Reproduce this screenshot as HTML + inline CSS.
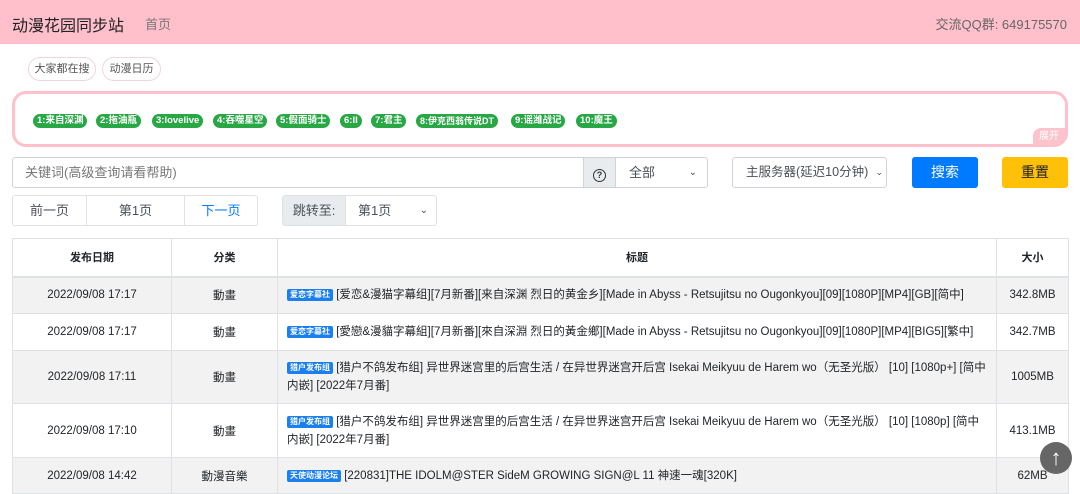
<!DOCTYPE html>
<html><head><meta charset="utf-8"><style>
*{box-sizing:border-box;margin:0;padding:0}
body{width:1080px;height:492px;overflow:hidden;background:#fff;font-family:"Liberation Sans","Noto Sans CJK SC",sans-serif;color:#212529;position:relative}
.a{position:absolute}
.hdr{left:0;top:0;width:1080px;height:44px;background:#ffc0cb}
.pill{top:57px;height:24px;border:1px solid #f0d6da;border-radius:12px;font-size:11px;color:#555;line-height:22px;text-align:center}
.box{left:12px;top:91px;width:1056px;height:56px;border:3px solid #ffc0cb;border-radius:14px}
.g{top:114px;height:14px;background:#28a745;color:#fff;font-size:9.5px;font-weight:bold;border-radius:7px;line-height:14px;padding:0 4px;white-space:nowrap}
.fc{border:1px solid #ced4da;height:31px;top:157px;font-size:13px;line-height:29px;color:#495057;white-space:nowrap;overflow:hidden}
.btn{top:157px;height:31px;border-radius:3px;font-size:14px;line-height:31px;text-align:center}
.pg{top:195px;height:31px;border:1px solid #dee2e6;font-size:13px;line-height:29px;text-align:center;color:#495057}
table{position:absolute;left:12px;top:238px;width:1057px;border-collapse:collapse;font-size:11.5px}
td,th{border:1px solid #dee2e6;padding:0 8px;text-align:center}
th{height:38px;font-weight:bold;font-size:11px;border-bottom:2px solid #dee2e6}
td.t{text-align:left;line-height:18px;padding:0 8px 0 9px}
tr.s td{background:#f2f2f2}
.b{display:inline-block;background:#1b7ff0;color:#fff;font-size:8px;padding:0 3px;border-radius:2px;line-height:12px;vertical-align:1px;font-weight:bold}
</style></head><body>
<div class="a hdr"></div>
<div class="a" style="left:12px;top:12px;font-size:16px;color:#222">动漫花园同步站</div>
<div class="a" style="left:145px;top:14px;font-size:13px;color:#777">首页</div>
<div class="a" style="right:13px;top:14px;font-size:13px;color:#666">交流QQ群: 649175570</div>
<div class="a pill" style="left:28px;width:68px">大家都在搜</div>
<div class="a pill" style="left:102px;width:59px">动漫日历</div>
<div class="a box"></div>
<div class="a g" style="left:33px">1:来自深渊</div>
<div class="a g" style="left:96px">2:拖油瓶</div>
<div class="a g" style="left:152px">3:lovelive</div>
<div class="a g" style="left:213px">4:吞噬星空</div>
<div class="a g" style="left:276px">5:假面骑士</div>
<div class="a g" style="left:340px">6:II</div>
<div class="a g" style="left:371px">7:君主</div>
<div class="a g" style="left:416px;font-size:9px">8:伊克西翁传说DT</div>
<div class="a g" style="left:511px">9:谣潍战记</div>
<div class="a g" style="left:576px">10:魔王</div>
<div class="a" style="left:1033px;top:128px;width:32px;height:17px;background:#fbc4cd;border-radius:8px 0 10px 0;color:#fff;font-size:10px;text-align:center;line-height:17px">展开</div>
<div class="a fc" style="left:12px;width:572px;padding-left:12px;border-radius:3px 0 0 3px;color:#777">关键词(高级查询请看帮助)</div>
<div class="a fc" style="left:583px;width:33px;background:#e9ecef;text-align:center;font-weight:bold;font-size:13px">
<span style="display:inline-block;width:13px;height:13px;border:1.5px solid #333;border-radius:50%;font-size:9px;line-height:10px;color:#333;vertical-align:-1px">?</span></div>
<div class="a fc" style="left:615px;width:93px;padding-left:13px;border-radius:0 3px 3px 0">全部<span style="position:absolute;right:10px;font-size:10px">⌄</span></div>
<div class="a fc" style="left:732px;width:155px;padding-left:13px;border-radius:3px;font-size:12.5px">主服务器(延迟10分钟)<span style="position:absolute;right:3px;font-size:9px;background:#fff">⌄</span></div>
<div class="a btn" style="left:912px;width:66px;background:#007bff;color:#fff">搜索</div>
<div class="a btn" style="left:1002px;width:66px;background:#ffc107;color:#222">重置</div>
<div class="a pg" style="left:12px;width:75px;border-radius:3px 0 0 3px">前一页</div>
<div class="a pg" style="left:86px;width:99px">第1页</div>
<div class="a pg" style="left:184px;width:74px;color:#007bff;border-radius:0 3px 3px 0">下一页</div>
<div class="a pg" style="left:282px;width:64px;background:#e9ecef;border-radius:3px 0 0 3px">跳转至:</div>
<div class="a pg" style="left:345px;width:92px;text-align:left;padding-left:12px;border-radius:0 3px 3px 0">第1页<span style="position:absolute;right:8px;font-size:10px">⌄</span></div>
<table>
<tr><th style="width:159px">发布日期</th><th style="width:106px">分类</th><th>标题</th><th style="width:72px">大小</th></tr>
<tr class="s" style="height:37px"><td>2022/09/08 17:17</td><td>動畫</td><td class="t"><span class="b">爱恋字幕社</span> [爱恋&amp;漫猫字幕组][7月新番][来自深渊 烈日的黄金乡][Made in Abyss - Retsujitsu no Ougonkyou][09][1080P][MP4][GB][简中]</td><td>342.8MB</td></tr>
<tr style="height:37px"><td>2022/09/08 17:17</td><td>動畫</td><td class="t"><span class="b">爱恋字幕社</span> [愛戀&amp;漫貓字幕組][7月新番][來自深淵 烈日的黃金鄉][Made in Abyss - Retsujitsu no Ougonkyou][09][1080P][MP4][BIG5][繁中]</td><td>342.7MB</td></tr>
<tr class="s" style="height:53px"><td>2022/09/08 17:11</td><td>動畫</td><td class="t"><span class="b">猎户发布组</span> [猎户不鸽发布组] 异世界迷宫里的后宫生活 / 在异世界迷宫开后宫 Isekai Meikyuu de Harem wo（无圣光版） [10] [1080p+] [简中内嵌] [2022年7月番]</td><td>1005MB</td></tr>
<tr style="height:54px"><td>2022/09/08 17:10</td><td>動畫</td><td class="t"><span class="b">猎户发布组</span> [猎户不鸽发布组] 异世界迷宫里的后宫生活 / 在异世界迷宫开后宫 Isekai Meikyuu de Harem wo（无圣光版） [10] [1080p] [简中内嵌] [2022年7月番]</td><td>413.1MB</td></tr>
<tr class="s" style="height:36px"><td>2022/09/08 14:42</td><td>動漫音樂</td><td class="t"><span class="b">天使动漫论坛</span> [220831]THE IDOLM@STER SideM GROWING SIGN@L 11 神速一魂[320K]</td><td>62MB</td></tr>
</table>
<div class="a" style="left:1040px;top:442px;width:32px;height:32px;border-radius:50%;background:#666;color:#fff;text-align:center;font-size:22px;font-weight:bold;line-height:32px">↑</div>
</body></html>
